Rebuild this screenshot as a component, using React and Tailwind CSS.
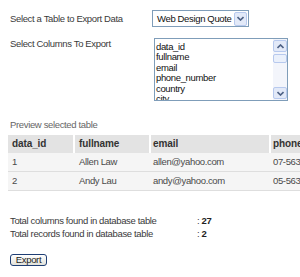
import React from "react";

const columns = ["data_id", "fullname", "email", "phone_number", "country", "city"];

const rows = [
  { id: "1", name: "Allen Law", email: "allen@yahoo.com", phone: "07-5634" },
  { id: "2", name: "Andy Lau", email: "andy@yahoo.com", phone: "05-5634" },
];

const Chevron = ({ up }) => (
  <svg width="7" height="5" viewBox="0 0 7 5">
    <path
      d={up ? "M0.5 4 L3.5 1 L6.5 4" : "M0.5 1 L3.5 4 L6.5 1"}
      fill="none"
      stroke="#4d6185"
      strokeWidth="1.6"
    />
  </svg>
);

const App = () => {
  return (
    <div className="w-[300px] h-[277px] overflow-hidden bg-white text-[9.5px] leading-[12px] tracking-[-0.35px] text-[#3a3a3a] font-['Liberation_Sans',Arial,sans-serif]">
      <div className="pl-[10px] pt-[10px]">
        {/* Table picker */}
        <div className="flex items-center h-[17px]">
          <p className="w-[142px]">Select a Table to Export Data</p>
          <div className="flex items-center w-[97px] h-[17px] border border-[#7f9db9] bg-white">
            <span className="flex-1 pl-[4px] text-[#111]">Web Design Quote</span>
            <span className="flex items-center justify-center w-[13px] h-[14px] mr-[1px] border border-[#b7c9ee] rounded-[2px] bg-[#e2e9f8]">
              <Chevron />
            </span>
          </div>
        </div>

        {/* Column picker */}
        <div className="flex items-start mt-[11px]">
          <p className="w-[144px]">Select Columns To Export</p>
          <div className="flex w-[134px] h-[63px] border border-[#7f9db9] bg-white">
            <div className="flex-1 pl-[1px] pt-[3px] leading-[10.4px] text-[#111] overflow-hidden">
              {columns.map((c) => (
                <p key={c}>{c}</p>
              ))}
            </div>
            <div className="flex flex-col w-[14px] py-[1px] bg-[#f3f5fb]">
              <span className="flex items-center justify-center h-[12px] border border-[#b7c9ee] rounded-[2px] bg-[#e2e9f8]">
                <Chevron up />
              </span>
              <span className="h-[9px] mt-[2px] border border-[#b7c9ee] rounded-[2px] bg-[#eaf0fb]" />
              <span className="flex-1" />
              <span className="flex items-center justify-center h-[12px] border border-[#b7c9ee] rounded-[2px] bg-[#e2e9f8]">
                <Chevron />
              </span>
            </div>
          </div>
        </div>

        {/* Preview */}
        <p className="mt-[18px] text-[#666]">Preview selected table</p>
      </div>

      <div className="ml-[8px] mt-[4px] w-[363px] grid grid-cols-[67px_76px_120px_100px] whitespace-nowrap">
        {["data_id", "fullname", "email", "phone_number"].map((h, i) => (
          <div
            key={h}
            className={`h-[18px] flex items-center bg-[#e3e3e3] text-[10px] tracking-[-0.1px] font-bold text-[#333] ${
              i < 3 ? "border-r-2 border-white" : ""
            } ${i < 2 ? "pl-[4px]" : "pl-[2px]"}`}
          >
            {h}
          </div>
        ))}
        {rows.map((r) =>
          [r.id, r.name, r.email, r.phone].map((v, i) => (
            <div
              key={r.id + i}
              className={`h-[19px] flex items-center bg-[#f5f5f5] border-b border-[#dedede] text-[#4a4a4a] ${
                i < 2 ? "pl-[4px]" : "pl-[2px]"
              }`}
            >
              {v}
            </div>
          ))
        )}
      </div>

      <div className="pl-[10px] mt-[24px] leading-[12.5px]">
        <div className="flex">
          <p className="w-[187px]">Total columns found in database table</p>
          <p>
            : <b className="text-[#222]">27</b>
          </p>
        </div>
        <div className="flex">
          <p className="w-[187px]">Total records found in database table</p>
          <p>
            : <b className="text-[#222]">2</b>
          </p>
        </div>

        <button className="mt-[14px] w-[37px] h-[12px] flex items-center justify-center text-[9.5px] leading-none text-[#222] border border-[#1f3e74] rounded-[3px] bg-gradient-to-b from-white to-[#e2e2da]">
          Export
        </button>
      </div>
    </div>
  );
};

export default App;
